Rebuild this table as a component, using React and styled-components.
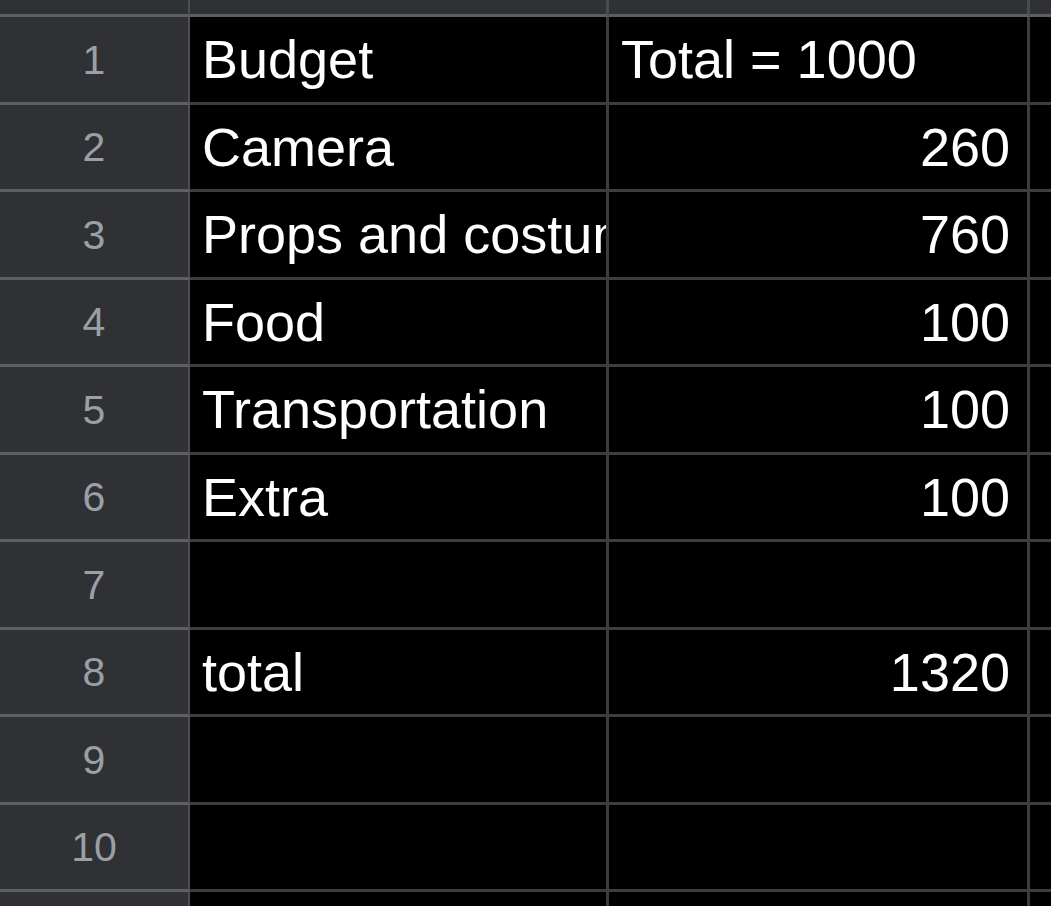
import React from "react";
import styled, { createGlobalStyle } from "styled-components";

const Global = createGlobalStyle`
  html, body { margin: 0; padding: 0; background: #000; overflow: hidden; }
  body { font-family: "Liberation Sans", Arial, sans-serif; }
`;

const Sheet = styled.div`
  display: grid;
  grid-template-columns: 190px 419px 421px 1fr;
  grid-template-rows: 17px repeat(11, 87.5px);
  width: 1051px;
  height: 906px;
  overflow: hidden;
  background: #000;
`;

const ColHeader = styled.div`
  box-sizing: border-box;
  background: #303134;
  border-bottom: 3px solid #5d5f63;
  border-right: ${(p) =>
    p.$last ? "none" : `${p.$corner ? 2 : 3}px solid ${p.$corner ? "#4c4e52" : "#4a4b4f"}`};
`;

const RowHeader = styled.div`
  box-sizing: border-box;
  background: #303134;
  border-bottom: 3px solid #5d5f63;
  border-right: 2px solid #4c4e52;
  display: flex;
  align-items: center;
  justify-content: center;
  color: #9aa0a6;
  font-size: 41px;
  padding-top: 2px;
`;

const Cell = styled.div`
  box-sizing: border-box;
  background: #000;
  border-bottom: 3px solid #3c3d40;
  border-right: ${(p) => (p.$last ? "none" : "3px solid #3c3d40")};
  display: flex;
  align-items: center;
  justify-content: ${(p) => (p.$num ? "flex-end" : "flex-start")};
  padding: ${(p) => (p.$num ? "0 17px 0 0" : "0 0 0 12px")};
  color: #fff;
  font-size: 54px;
  white-space: nowrap;
  overflow: hidden;
`;

const rows = [
  ["Budget", "Total = 1000", false],
  ["Camera", "260", true],
  ["Props and costumes", "760", true],
  ["Food", "100", true],
  ["Transportation", "100", true],
  ["Extra", "100", true],
  ["", "", false],
  ["total", "1320", true],
  ["", "", false],
  ["", "", false],
  ["", "", false],
];

export default function App() {
  return (
    <>
      <Global />
      <Sheet>
        <ColHeader $corner />
        <ColHeader />
        <ColHeader />
        <ColHeader $last />
        {rows.map(([a, b, num], i) => (
          <React.Fragment key={i}>
            <RowHeader>{i < 10 ? i + 1 : ""}</RowHeader>
            <Cell>{a}</Cell>
            <Cell $num={num}>{b}</Cell>
            <Cell $last />
          </React.Fragment>
        ))}
      </Sheet>
    </>
  );
}
